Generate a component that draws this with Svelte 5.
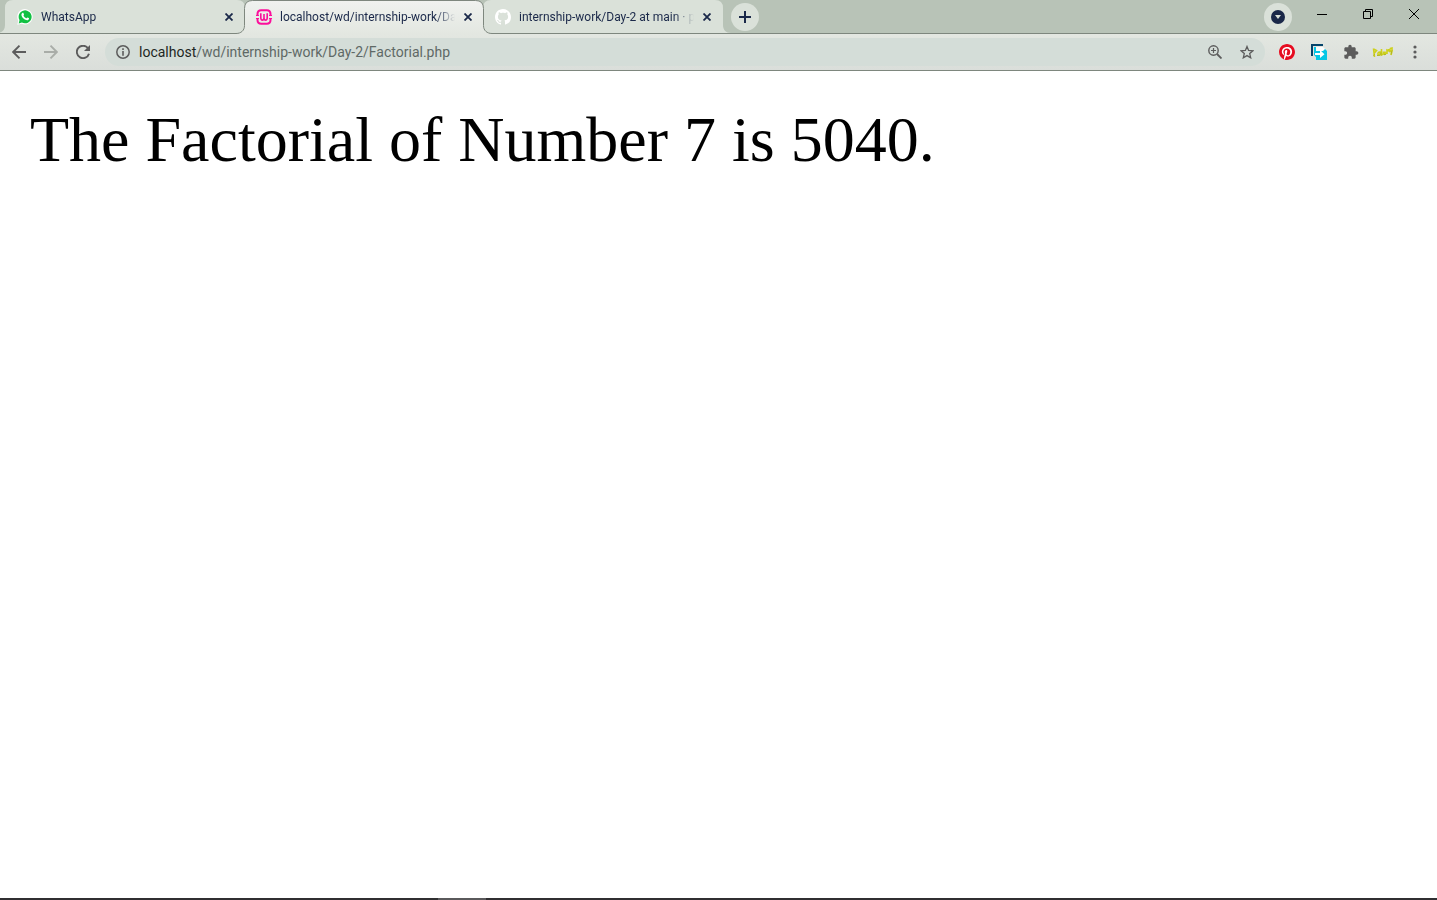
<script>
  const tabs = [
    { title: 'WhatsApp', icon: 'whatsapp' },
    { title: 'localhost/wd/internship-work/Day', icon: 'wamp', active: true },
    { title: 'internship-work/Day-2 at main · p', icon: 'github' }
  ];
  let url = $state('/wd/internship-work/Day-2/Factorial.php');
</script>

<div class="browser">
  <header class="strip">
    <div class="tabs">
      {#each tabs as tab}
        <div class="tab" class:active={tab.active}>
          <svg class="shape" width="256" height="34" viewBox="0 0 256 34" aria-hidden="true">
            <defs>
              <linearGradient id="lit" x1="0" y1="0" x2="0" y2="1">
                <stop offset="0" stop-color="#f0f2ef" />
                <stop offset="1" stop-color="#e3e7e1" />
              </linearGradient>
            </defs>
            {#if tab.active}
              <path d="M0 34v-.5c5 0 8.500-3 8.500-8V8.500q0-8 8-8h223q8 0 8 8v17c0 5 3.500 8 8.500 8v.5z" fill="url(#lit)" />
              <path d="M0 33.500c5 0 8.500-3 8.500-8V8.500q0-8 8-8h223q8 0 8 8v17c0 5 3.500 8 8.500 8" fill="none" stroke="#7e877e" />
            {:else}
              <path d="M0 33c5 0 8-3 8-8V8q0-8 8-8h224q8 0 8 8v17c0 5 3 8 8 8z" fill="#dae1d9" />
            {/if}
          </svg>
          <button class="pick">
            <svg class="fav" width="16" height="16" viewBox="0 0 16 16" aria-hidden="true">
              {#if tab.icon === 'whatsapp'}
                <path d="M.3 15.800l1-4.100A7.700 7.700 0 1 1 4.500 14.700z" fill="#fff" />
                <path d="M1.700 14.400l.8-3.300A6.500 6.500 0 1 1 4.900 13.500z" fill="#12c143" />
                <path d="M5.300 4c.5-.4 1-.3 1.200.2l.5 1.300c.1.400-.6.900-.5 1.200.6 1.100 1.500 2 2.700 2.500.4.100.8-1 1.200-.8l1.400.7c.5.300.1 1.300-.3 1.700-1.200 1.100-3.200.2-4.400-.7C5.900 9.100 4.900 7.800 4.500 6.500c-.2-.9 0-1.900.8-2.500z" fill="#fff" />
              {:else if tab.icon === 'wamp'}
                <g fill="none" stroke="#fb0f9b" stroke-width="2">
                  <path d="M1.500 6V5q0-3.700 3.700-3.700h5.600q3.700 0 3.700 3.700v1M1.500 10v1q0 3.700 3.700 3.700h5.600q3.700 0 3.700-3.700v-1" />
                  <path d="M4.800 4.300v4.500q0 2.300 1.600 2.300T8 8.800V5v3.800q0 2.300 1.600 2.300t1.600-2.300v-4.500" stroke-width="1.600" />
                  <path d="M0 6.500h3M0 9.500h3M13 6.500h3M13 9.500h3" stroke-width="1.200" />
                </g>
              {:else}
                <path fill="#fff" d="M8 0C3.580 0 0 3.580 0 8c0 3.540 2.290 6.530 5.470 7.590.4.070.55-.17.55-.38 0-.19-.01-.82-.01-1.490-2.010.37-2.530-.49-2.690-.94-.09-.23-.48-.94-.82-1.130-.28-.15-.68-.52-.01-.53.63-.01 1.080.58 1.230.82.72 1.210 1.870.87 2.330.66.070-.52.280-.87.510-1.070-1.780-.2-3.640-.89-3.640-3.950 0-.87.310-1.590.82-2.150-.08-.2-.36-1.020.08-2.120 0 0 .67-.21 2.200.82.640-.18 1.320-.27 2-.27s1.360.09 2 .27c1.530-1.040 2.200-.82 2.200-.82.440 1.100.160 1.920.080 2.120.510.560.820 1.270.820 2.150 0 3.070-1.870 3.750-3.650 3.950.290.250.540.730.540 1.480 0 1.070-.01 1.930-.01 2.200 0 .21.150.46.550.38A8.010 8.010 0 0 0 16 8c0-4.420-3.580-8-8-8z" />
              {/if}
            </svg>
            <span class="title">{tab.title}</span>
          </button>
          <button class="close" aria-label="Close tab">
            <svg width="8" height="8" viewBox="0 0 8 8"><path d="M.5.500l7 7M7.500.500l-7 7" stroke="#1a2849" stroke-width="1.800" /></svg>
          </button>
        </div>
      {/each}
    </div>
    <button class="round" aria-label="New tab">
      <svg width="12" height="12" viewBox="0 0 12 12"><path d="M6 0v12M0 6h12" stroke="#1a2849" stroke-width="2" /></svg>
    </button>
    <div class="window">
      <button class="round" aria-label="Search tabs">
        <svg width="14" height="14" viewBox="0 0 14 14"><circle cx="7" cy="7" r="7" fill="#1a2849" /><path d="M4 5h6L7 9z" fill="#dae1d9" /></svg>
      </button>
      <div class="controls">
        <button aria-label="Minimize"><svg width="10" height="10" viewBox="0 0 10 10"><path d="M0 5.500h10" stroke="#000" /></svg></button>
        <button aria-label="Restore"><svg width="10" height="10" viewBox="0 0 10 10"><path d="M.5 2.500h7v7h-7zM2.500 2.500v-2h7v7h-2" fill="none" stroke="#000" /></svg></button>
        <button aria-label="Close"><svg width="10" height="10" viewBox="0 0 10 10"><path d="M0 0l10 10M10 0L0 10" stroke="#000" /></svg></button>
      </div>
    </div>
  </header>

  <nav class="toolbar">
    <button aria-label="Back"><svg width="14" height="14" viewBox="0 0 14 14"><path d="M14 7H1.500M7.500.700L1.200 7l6.300 6.300" fill="none" stroke="#5c5c5c" stroke-width="1.900" /></svg></button>
    <button aria-label="Forward"><svg width="14" height="14" viewBox="0 0 14 14"><path d="M0 7h12.500M6.500.700L12.800 7l-6.300 6.300" fill="none" stroke="#a9ada8" stroke-width="1.900" /></svg></button>
    <button aria-label="Reload"><svg width="14" height="14" viewBox="0 0 14 14"><path d="M12 3.200A6.200 6.200 0 1 0 13 8.700" fill="none" stroke="#5c5c5c" stroke-width="1.900" /><path d="M14 0v6H8z" fill="#5c5c5c" /></svg></button>
    <form class="omnibox" onsubmit={(e) => e.preventDefault()}>
      <button type="button" aria-label="Site information"><svg width="14" height="14" viewBox="0 0 14 14"><circle cx="7" cy="7" r="6.200" fill="none" stroke="#5c5c5c" stroke-width="1.500" /><path d="M7 3.300v1.600M7 6v4.700" stroke="#5c5c5c" stroke-width="1.600" /></svg></button>
      <label for="address">localhost</label>
      <input id="address" type="text" bind:value={url} spellcheck="false" />
      <button type="button" aria-label="Zoom"><svg width="14" height="14" viewBox="0 0 14 14"><circle cx="5.500" cy="5.500" r="4.700" fill="none" stroke="#5c5c5c" stroke-width="1.400" /><path d="M9 9l4.500 4.500" stroke="#5c5c5c" stroke-width="1.800" /><path d="M5.500 3v5M3 5.500h5" stroke="#5c5c5c" stroke-width="1.200" /></svg></button>
      <button type="button" aria-label="Bookmark"><svg width="14" height="14" viewBox="0 0 14 14"><path d="M7 1.500l1.600 3.900 4.300.4-3.200 2.800 1 4.200L7 10.600l-3.700 2.200 1-4.200L1.100 5.800l4.300-.4z" fill="none" stroke="#5c5c5c" stroke-width="1.300" /></svg></button>
    </form>
    <div class="extensions">
      <button aria-label="Pinterest"><svg width="16" height="16" viewBox="0 0 24 24"><circle cx="12" cy="12" r="11.500" fill="#fff" /><path fill="#e60c20" d="M12 0C5.370 0 0 5.370 0 12c0 5.080 3.160 9.420 7.620 11.160-.1-.95-.2-2.400.04-3.440.22-.93 1.410-5.960 1.410-5.960s-.36-.72-.36-1.780c0-1.670.97-2.910 2.170-2.910 1.020 0 1.520.77 1.520 1.690 0 1.030-.66 2.570-1 4-.28 1.190.6 2.170 1.780 2.170 2.130 0 3.770-2.250 3.770-5.490 0-2.870-2.060-4.870-5.010-4.870-3.410 0-5.420 2.560-5.420 5.200 0 1.030.4 2.130.89 2.740.1.120.110.220.080.340l-.33 1.360c-.05.220-.17.270-.4.160-1.500-.7-2.440-2.890-2.440-4.650 0-3.780 2.750-7.260 7.930-7.260 4.160 0 7.400 2.970 7.400 6.930 0 4.140-2.610 7.460-6.230 7.460-1.220 0-2.360-.63-2.750-1.380l-.75 2.850c-.27 1.050-1 2.350-1.490 3.150C9.570 23.810 10.760 24 12 24c6.630 0 12-5.370 12-12S18.630 0 12 0z" /></svg></button>
      <button aria-label="Send page"><svg width="16" height="16" viewBox="0 0 16 16"><path d="M0 0h12v2H2v10H0z" fill="#05446b" /><path d="M3 3h9l2 2v3H3z" fill="#fafcfc" /><path d="M5 7h7l2-2 2 2v9H5z" fill="#06c7e5" /><path d="M3 3h2v10l-2-2z" fill="#06c7e5" /><path d="M4 9h5V6l4.500 4.200L9 14v-3H4z" fill="#fff" /></svg></button>
      <button aria-label="Extensions"><svg width="16" height="16" viewBox="0 0 24 24"><path fill="#5c5c5c" d="M20.500 11H19V7c0-1.100-.9-2-2-2h-4V3.500C13 2.120 11.880 1 10.500 1S8 2.120 8 3.500V5H4c-1.100 0-1.990.9-1.990 2v3.800H3.500c1.490 0 2.700 1.210 2.700 2.700s-1.210 2.700-2.700 2.700H2V20c0 1.100.9 2 2 2h3.800v-1.500c0-1.490 1.210-2.700 2.700-2.700s2.700 1.210 2.700 2.700V22H17c1.100 0 2-.9 2-2v-4h1.500c1.380 0 2.500-1.120 2.500-2.500S21.880 11 20.500 11z" /></svg></button>
      <button aria-label="Profile"><svg width="22" height="12" viewBox="0 0 22 12"><path d="M1.500 2.500l1 8.500M1.500 3l3 1.500-2.500 3M6 6.500v2.500l2-.5V6L6 6.500M9.500 3v6l2-1V5.500M13 5.500V8l1.500-1M15 8V4l2 1-.5-2M18 2.500v3l2-.5V2l-2 .5M20.300 4l-1.300 5" fill="none" stroke="#cdd01c" stroke-width="1.600" /><path d="M1.500 10l1-2M9 9.500V6.500M19 8.500l1-4M5 9.500h3M12 8.500h2" stroke="#a9ae24" stroke-width=".8" /></svg></button>
      <button aria-label="Menu"><svg width="16" height="16" viewBox="0 0 16 16" fill="#5c5c5c"><circle cx="8" cy="3" r="1.600" /><circle cx="8" cy="8" r="1.600" /><circle cx="8" cy="13" r="1.600" /></svg></button>
    </div>
  </nav>

  <main>
    <p>The Factorial of Number 7 is 5040.</p>
  </main>
  <footer><span></span></footer>
</div>

<style>
  :global(body) { margin: 0; background: #fff; }
  .browser { display: flex; flex-direction: column; min-height: 100vh; font-family: Roboto, "Open Sans", sans-serif; }
  button { display: flex; align-items: center; justify-content: center; flex: none; padding: 0; border: 0; background: none; font: inherit; color: inherit; }
  svg { display: block; flex: none; }

  .strip { display: flex; align-items: center; height: 33px; padding-left: 5px; background: #b8c3b7; border-bottom: 1px solid #7e877e; }
  .tabs { display: flex; align-self: stretch; }
  .tab { position: relative; display: flex; align-items: center; box-sizing: border-box; width: 239px; height: 33px; padding: 0 7px 0 12px; }
  .tab.active { z-index: 1; }
  .shape { position: absolute; left: -8px; top: 0; }
  .pick { position: relative; flex: 1; gap: 8px; min-width: 0; justify-content: flex-start; }
  .title { flex: 1; min-width: 0; overflow: hidden; white-space: nowrap; text-align: left; font-size: 12px; line-height: 16px; color: #1a2849; mask-image: linear-gradient(to right, #000 calc(100% - 20px), transparent); }
  .close { position: relative; width: 16px; height: 16px; margin-left: 5px; }
  .round { width: 28px; height: 28px; border-radius: 50%; background: #dae1d9; }
  .tabs + .round { margin-left: 9px; }
  .window { display: flex; align-items: center; align-self: stretch; gap: 7px; margin-left: auto; }
  .controls { display: flex; align-self: flex-start; }
  .controls button { width: 46px; height: 28px; }

  .toolbar { display: flex; align-items: center; height: 36px; background: linear-gradient(#e3e7e1, #dadeda); border-bottom: 1px solid #7e877e; padding: 0 6px 0 3px; }
  .toolbar > button { width: 32px; height: 28px; }
  .omnibox { display: flex; align-items: center; flex: 1; height: 28px; margin: 0 6px; padding: 0 2px; box-sizing: border-box; border-radius: 14px; background: #d4ddd8; font-size: 14px; line-height: 20px; }
  .omnibox button { width: 32px; height: 28px; }
  .omnibox label { color: #1d2623; }
  .omnibox input { flex: 1; min-width: 0; height: 20px; padding: 0; border: 0; outline: 0; background: none; font: inherit; color: #5f6966; }
  .extensions { display: flex; }
  .extensions button { width: 32px; height: 28px; }

  main { flex: 1; padding: 0 30px; }
  p { margin: 32px 0; font-family: "Liberation Serif", "Times New Roman", serif; font-size: 64px; line-height: 74px; color: #000; }
  footer { height: 2px; background: #302f31; }
  footer span { display: block; width: 48px; height: 2px; margin-left: 438px; background: #5a595b; }
</style>
